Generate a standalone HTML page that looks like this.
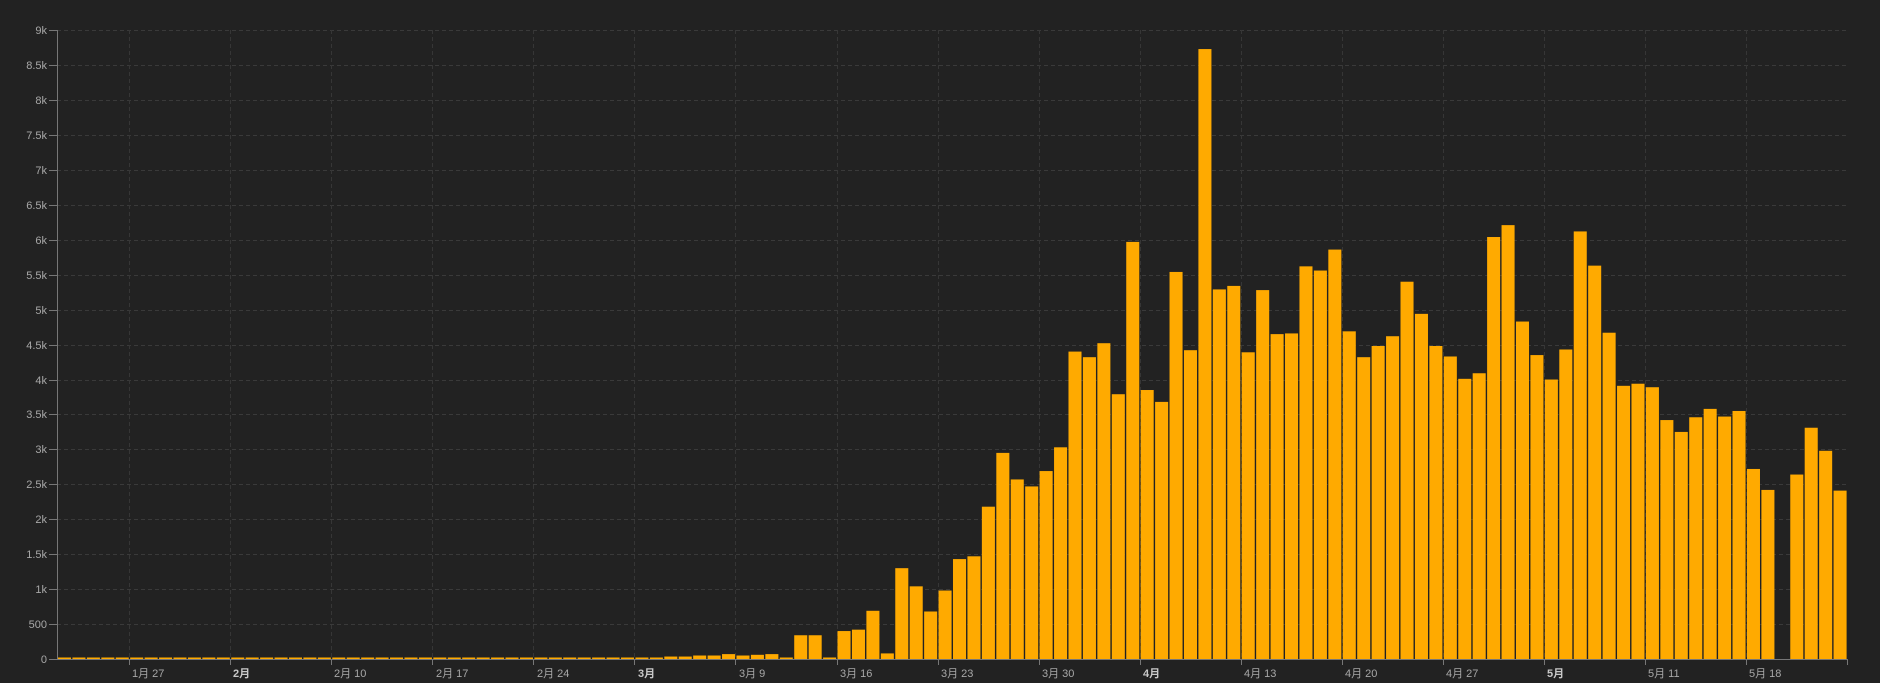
<!DOCTYPE html>
<html><head><meta charset="utf-8">
<style>
html,body{margin:0;padding:0;background:#222222;}
svg{display:block;}
text{font-family:"Liberation Sans","Noto Sans CJK SC",sans-serif;font-size:11px;fill:#a8a8a8;}
.b{font-weight:bold;fill:#c8c8c8;}
</style></head>
<body>
<svg id="c" width="1880" height="683" viewBox="0 0 1880 683" xmlns="http://www.w3.org/2000/svg">
<rect width="1880" height="683" fill="#222222"/>
<g id="grid"></g>
<g id="bars"></g>
<g id="axis"></g>
<g text-anchor="end">
<text x="47" y="663">0</text>
<text x="47" y="628">500</text>
<text x="47" y="593">1k</text>
<text x="47" y="558">1.5k</text>
<text x="47" y="523">2k</text>
<text x="47" y="488">2.5k</text>
<text x="47" y="453">3k</text>
<text x="47" y="418">3.5k</text>
<text x="47" y="384">4k</text>
<text x="47" y="349">4.5k</text>
<text x="47" y="314">5k</text>
<text x="47" y="279">5.5k</text>
<text x="47" y="244">6k</text>
<text x="47" y="209">6.5k</text>
<text x="47" y="174">7k</text>
<text x="47" y="139">7.5k</text>
<text x="47" y="104">8k</text>
<text x="47" y="69">8.5k</text>
<text x="47" y="34">9k</text>
</g>
<g>
<text x="132" y="677">1月 27</text>
<text x="233" y="677" class="b">2月</text>
<text x="334" y="677">2月 10</text>
<text x="436" y="677">2月 17</text>
<text x="537" y="677">2月 24</text>
<text x="638" y="677" class="b">3月</text>
<text x="739" y="677">3月 9</text>
<text x="840" y="677">3月 16</text>
<text x="941" y="677">3月 23</text>
<text x="1042" y="677">3月 30</text>
<text x="1143" y="677" class="b">4月</text>
<text x="1244" y="677">4月 13</text>
<text x="1345" y="677">4月 20</text>
<text x="1446" y="677">4月 27</text>
<text x="1547" y="677" class="b">5月</text>
<text x="1648" y="677">5月 11</text>
<text x="1749" y="677">5月 18</text>
</g>
</svg>
<script>
var NS="http://www.w3.org/2000/svg";
function el(t,a,p){var e=document.createElementNS(NS,t);for(var k in a)e.setAttribute(k,a[k]);document.getElementById(p).appendChild(e);return e;}
var x0=57,x1=1847,y0=659,W=(x1-x0)/124,K=628.8/9000;
// grid
for(var i=1;i<=18;i++){var y=Math.round(y0-i*500*K)+0.5;el('line',{x1:x0,x2:x1,y1:y,y2:y,stroke:'#3a3a3a','stroke-dasharray':'4,3'},'grid');}
for(var j=0;j<17;j++){var x=Math.round(x0+(5+7*j)*W)+0.5;el('line',{x1:x,x2:x,y1:30,y2:y0,stroke:'#363636','stroke-dasharray':'4,3'},'grid');}
var v=[];
for(var i=0;i<39;i++)v.push(3);
v=v.concat([20,5,20,35,35,50,50,70,50,60,70,3,340,340,3,400,420,690,80,1300,1040,680,980,1430,1470,2180,2950,2570,2470,2690,3030,4400,4320,4520,3790,5970,3850,3680,5540,4420,8730,5290,5340,4390,5280,4650,4660,5620,5560,5860,4690,4320,4480,4620,5400,4940,4480,4330,4010,4090,6040,6210,4830,4350,4000,4430,6120,5630,4670,3910,3940,3890,3420,3250,3460,3580,3470,3550,2720,2420,0,2640,3310,2980,2410]);
for(var i=0;i<v.length;i++){if(!v[i])continue;var h=Math.max(1.5,v[i]*K);var x=x0+i*W+1;el('rect',{x:x.toFixed(2),y:(y0-h).toFixed(2),width:(W-1.4).toFixed(2),height:h.toFixed(2),fill:'#FFAA00'},'bars');}
// axis
el('line',{x1:x0+0.5,x2:x0+0.5,y1:30,y2:y0,stroke:'#777'},'axis');
el('line',{x1:x0,x2:x1,y1:y0+0.5,y2:y0+0.5,stroke:'#777'},'axis');
for(var i=0;i<=18;i++){var y=Math.round(y0-i*500*K)+0.5;el('line',{x1:49,x2:x0,y1:y,y2:y,stroke:'#777'},'axis');}
for(var j=0;j<17;j++){var x=Math.round(x0+(5+7*j)*W)+0.5;el('line',{x1:x,x2:x,y1:y0,y2:y0+6,stroke:'#777'},'axis');}
el('line',{x1:x1+0.5,x2:x1+0.5,y1:y0,y2:y0+6,stroke:'#777'},'axis');
</script>
</body></html>
